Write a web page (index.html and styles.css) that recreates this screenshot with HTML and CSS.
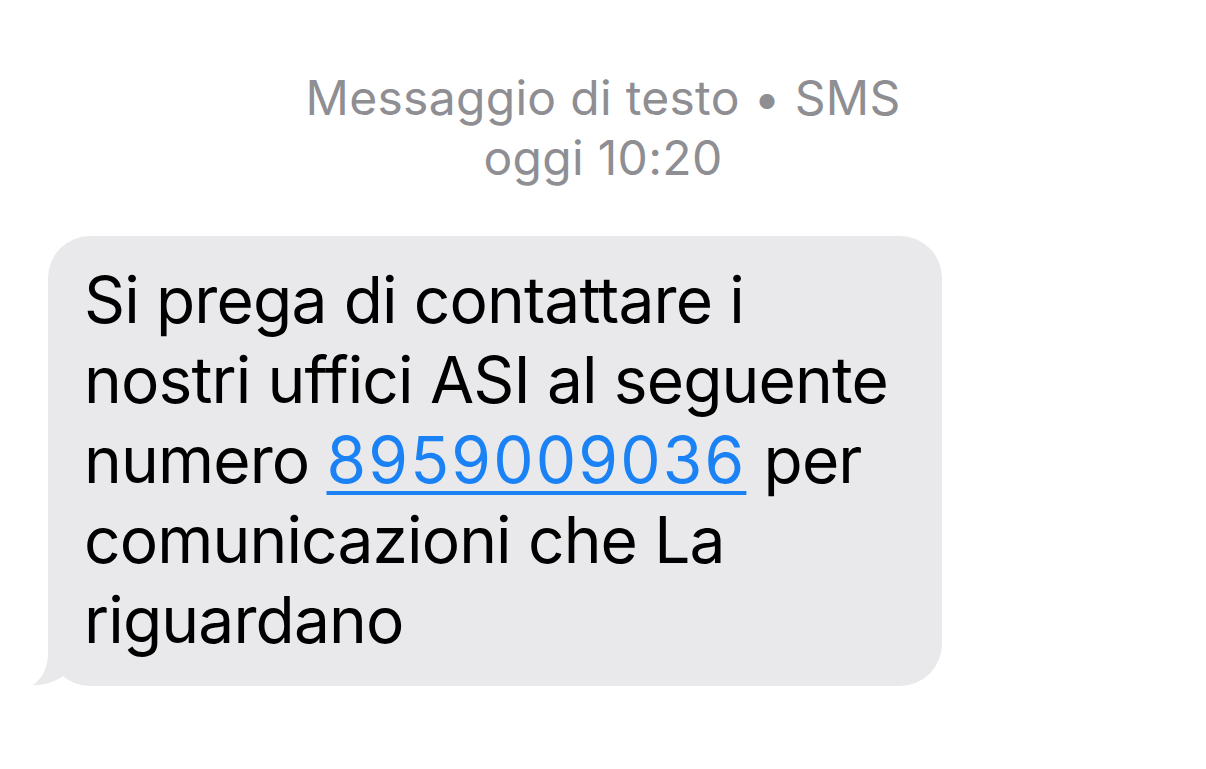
FILE: index.html
```html
<!DOCTYPE html>
<html lang="it">
<head>
<meta charset="utf-8">
<link rel="stylesheet" href="styles.css">
</head>
<body>
<div class="screen">
  <header class="meta">
    <div class="meta-line">Messaggio di testo • SMS</div>
    <div class="meta-line">oggi 10:20</div>
  </header>
  <div class="thread">
    <div class="bubble">
      <svg class="tail" width="58" height="46" viewBox="0 0 58 46" aria-hidden="true">
        <path d="M15 0 L15 14 C15 28 8 40 0 45 C12 46 26 40 34 33 C40 39 47 44 58 46 L58 0 Z" fill="#e9e9eb"/>
      </svg>
      <p class="msg">Si prega di contattare i<br>nostri uffici ASI al seguente<br>numero <a class="link" href="#">8959009036</a> per<br>comunicazioni che La<br>riguardano</p>
    </div>
  </div>
</div>
</body>
</html>
```
FILE: styles.css
```css
html, body {
  margin: 0;
  padding: 0;
  background: #ffffff;
}
.screen {
  width: 1206px;
  height: 769px;
  font-family: Inter, "Noto Sans", "Liberation Sans", sans-serif;
}
.meta {
  padding-top: 68px;
  text-align: center;
  color: #8e8e93;
  font-size: 48px;
  line-height: 60px;
  letter-spacing: 0.3px;
  font-weight: 400;
}
.thread {
  padding-top: 48px;
  padding-left: 48px;
}
.bubble {
  position: relative;
  width: 894px;
  box-sizing: border-box;
  background: #e9e9eb;
  border-radius: 42px;
  padding: 24px 20px 26px 36px;
}
.tail {
  position: absolute;
  left: -15px;
  bottom: 0;
}
.msg {
  position: relative;
  margin: 0;
  font-size: 64px;
  line-height: 80px;
  letter-spacing: -0.85px;
  color: #000000;
  white-space: nowrap;
}
.link {
  color: #1a82f4;
  text-decoration: underline;
  text-decoration-thickness: 4px;
  text-underline-offset: 8px;
  letter-spacing: 2.2px;
}
```
